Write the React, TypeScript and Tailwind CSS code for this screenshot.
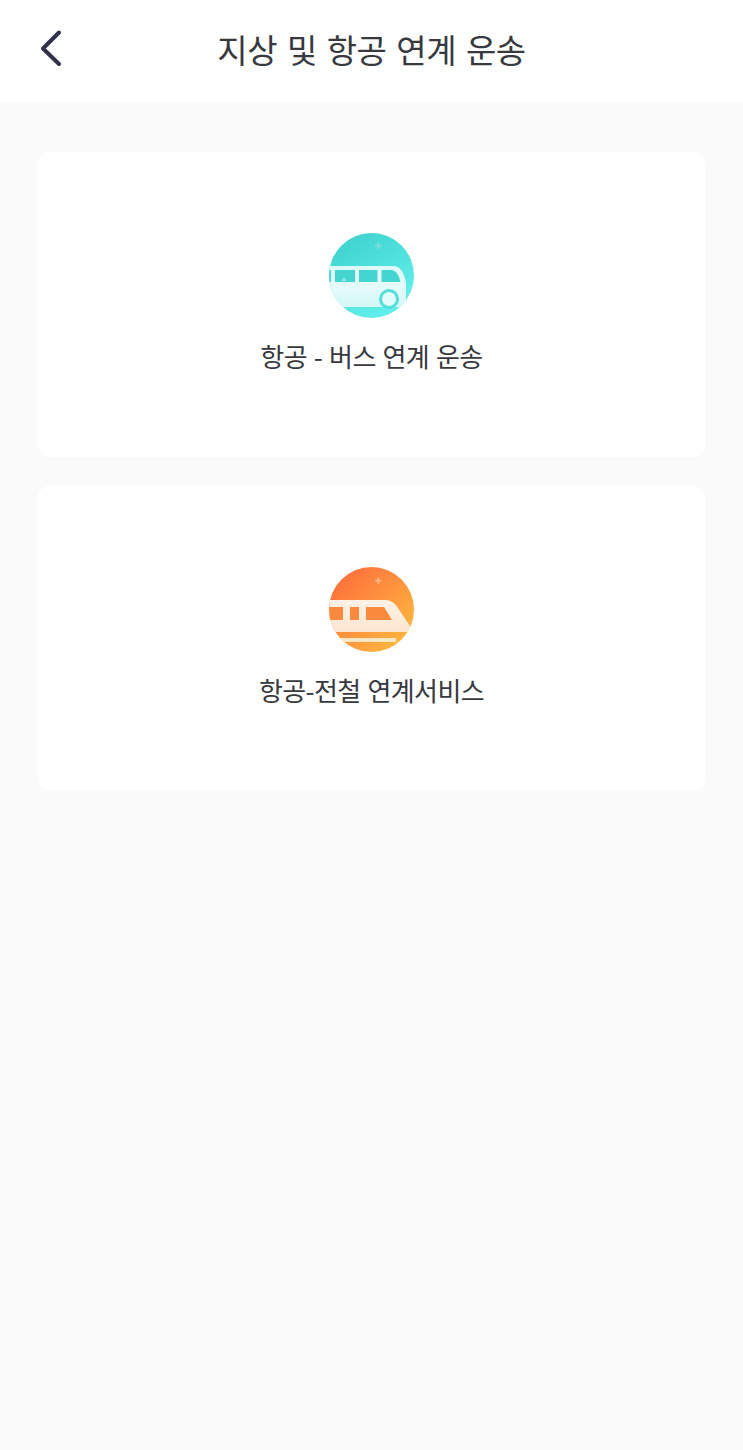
import { ReactNode } from "react";

function BusIcon() {
  return (
    <svg width="85" height="85" viewBox="0 0 85 85" className="block blur-[0.5px]">
      <defs>
        <linearGradient id="busBg" x1="0" y1="0" x2="0.6" y2="1">
          <stop offset="0" stopColor="#3bcfca" />
          <stop offset="1" stopColor="#62efec" />
        </linearGradient>
        <linearGradient id="busBody" x1="0" y1="0" x2="0" y2="1">
          <stop offset="0" stopColor="#ffffff" stopOpacity="0.8" />
          <stop offset="0.55" stopColor="#e4fbfa" />
          <stop offset="1" stopColor="#d2f8f7" />
        </linearGradient>
        <clipPath id="busClip">
          <circle cx="42.5" cy="42.5" r="42.5" />
        </clipPath>
      </defs>
      <circle cx="42.5" cy="42.5" r="42.5" fill="url(#busBg)" />
      <g clipPath="url(#busClip)">
        <path d="M0 33H64C71 33 75 39 77 50V68C77 72 75 74 72 74H0Z" fill="url(#busBody)" />
        <path d="M0 37H2V49H0ZM6 37H26V49H6ZM30 37H48.5V49H30ZM52.5 37H62C67 37 70 42 71.5 49H52.5Z" fill="#45d5d1" />
        <circle cx="60" cy="66" r="10" fill="#52dfdb" />
        <circle cx="60" cy="66" r="7" fill="#dffbfa" />
      </g>
      <path d="M49.3 9.5V16M46 12.7H52.5" stroke="#7fdfdc" strokeWidth="1.8" />
      <path d="M15 44.5V50M12.5 47H17.5" stroke="#a5ecea" strokeWidth="1.2" />
    </svg>
  );
}

function TrainIcon() {
  return (
    <svg width="85" height="85" viewBox="0 0 85 85" className="block blur-[0.5px]">
      <defs>
        <linearGradient id="trainBg" x1="0.1" y1="0.1" x2="0.9" y2="0.9">
          <stop offset="0" stopColor="#ff6f3c" />
          <stop offset="1" stopColor="#ffb83f" />
        </linearGradient>
        <linearGradient id="trainBody" x1="0" y1="0" x2="0" y2="1">
          <stop offset="0" stopColor="#fff1e6" />
          <stop offset="1" stopColor="#fde6d0" />
        </linearGradient>
        <clipPath id="trainClip">
          <circle cx="42.5" cy="42.5" r="42.5" />
        </clipPath>
      </defs>
      <circle cx="42.5" cy="42.5" r="42.5" fill="url(#trainBg)" />
      <g clipPath="url(#trainClip)">
        <path d="M0 33H56C62 33 66 36 69 41L81 59C82 62 81 65 77 65H0Z" fill="url(#trainBody)" />
        <path d="M0 40H14V53H0ZM21 40H30V53H21ZM37 40H55L63 53H37Z" fill="#fc8a3e" />
        <path d="M9 71H67V75H9Z" fill="#ffe6c4" />
      </g>
      <path d="M49.3 10.5V17M46 13.7H52.5" stroke="#ffb489" strokeWidth="1.8" />
    </svg>
  );
}

function ServiceCard({ icon, label }: { icon: ReactNode; label: string }) {
  return (
    <div className="flex h-[305px] flex-col items-center rounded-xl bg-white pt-[81px]">
      {icon}
      <div className="mt-[19px] text-[26px] leading-[38px] tracking-[-0.6px] [word-spacing:1.6px] text-[#38393e]">
        {label}
      </div>
    </div>
  );
}

export default function App() {
  return (
    <div
      className="flex min-h-[1450px] flex-col bg-[#fafafa]"
      style={{ fontFamily: '"Noto Sans CJK KR", "Noto Sans", sans-serif' }}
    >
      <header className="relative flex h-[103px] items-center justify-center bg-white pb-[6px]">
        <svg width="28" height="40" viewBox="0 0 28 40" fill="none" className="absolute left-[38px] top-[29px]">
          <path d="M21 3.5L5 19.5L21 35" stroke="#30334b" strokeWidth="4" strokeLinecap="round" strokeLinejoin="round" />
        </svg>
        <h1 className="text-[33px] leading-[44px] font-normal tracking-[-0.5px] [word-spacing:3px] text-[#38393e]">
          지상 및 항공 연계 운송
        </h1>
      </header>
      <main className="flex flex-col gap-[29px] px-[38px] pt-[49px]">
        <ServiceCard icon={<BusIcon />} label="항공 - 버스 연계 운송" />
        <ServiceCard icon={<TrainIcon />} label="항공-전철 연계서비스" />
      </main>
    </div>
  );
}
